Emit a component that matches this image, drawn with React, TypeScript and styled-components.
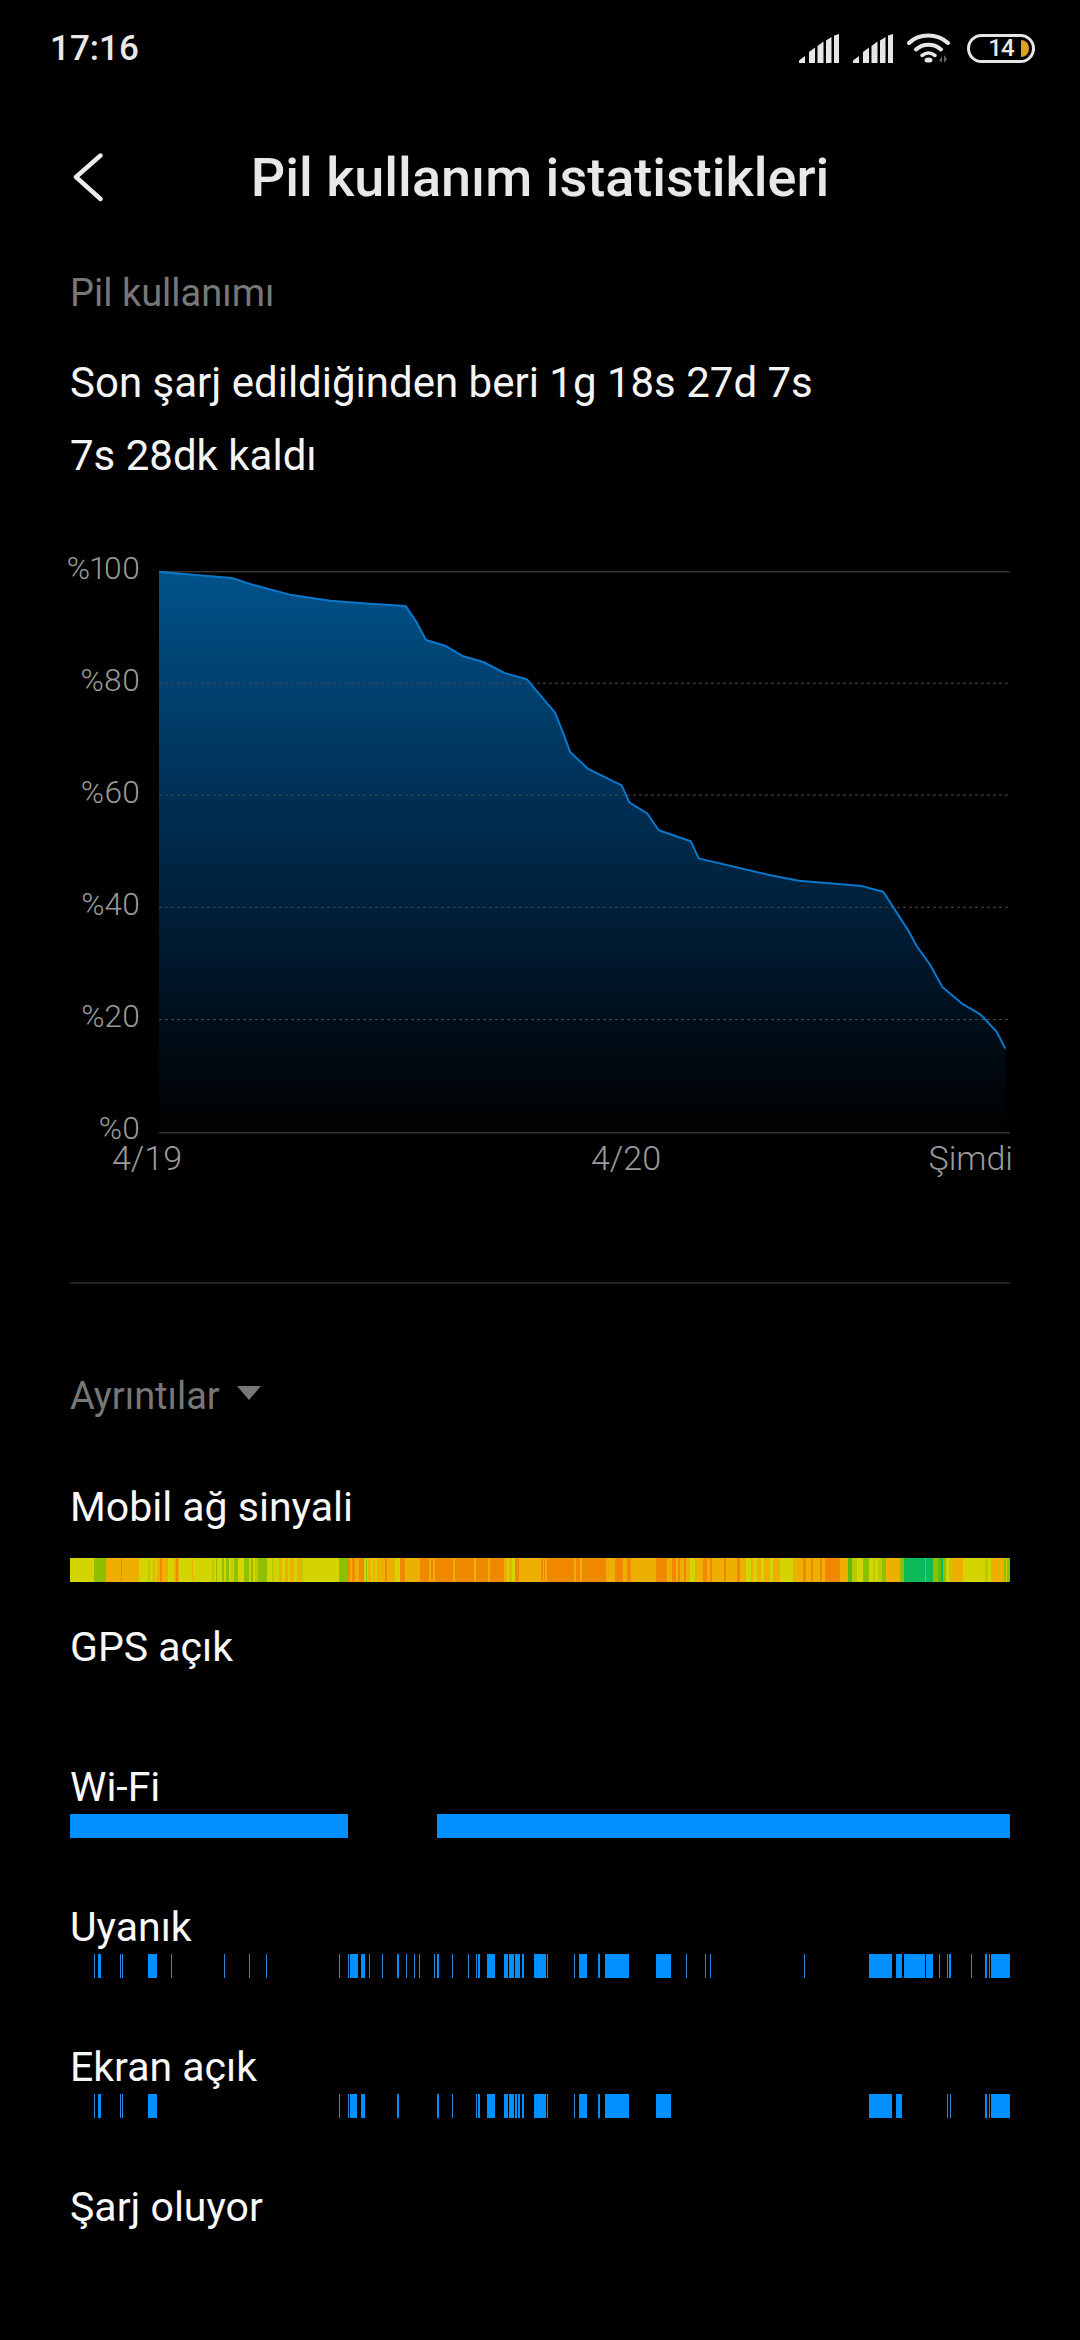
import React from "react";
import styled, { createGlobalStyle } from "styled-components";

const GlobalStyle = createGlobalStyle`
  html, body { margin: 0; padding: 0; background: #000; }
  body { font-family: Roboto, "Noto Sans", sans-serif; color: #fff; }
`;

const Page = styled.div`
  width: 1080px;
  height: 2340px;
  background: #000;
  overflow: hidden;
`;

const StatusBar = styled.div`
  height: 96px;
  padding: 0 45px 0 50px;
  display: flex;
  align-items: center;
  justify-content: space-between;
`;

const Clock = styled.span`
  font-size: 35px;
  font-weight: 500;
  color: #e8e8e8;
`;

const StatusIcons = styled.div`
  display: flex;
  align-items: center;
  gap: 14px;
`;

const Battery = styled.div`
  position: relative;
  box-sizing: border-box;
  width: 68px;
  height: 29px;
  margin-left: 2px;
  border: 3px solid #e6e6e6;
  border-radius: 15px;
  display: flex;
  align-items: center;
  justify-content: center;
  font-size: 24px;
  font-weight: 500;
  letter-spacing: -1px;
  color: #e8e8e8;
`;

const BatteryFill = styled.span`
  position: absolute;
  right: 3px;
  top: 3px;
  width: 8px;
  height: 17px;
  background: #e0a020;
  border-radius: 0 10px 10px 0;
`;

const Header = styled.header`
  height: 162px;
  display: grid;
  grid-template-columns: 160px 1fr 160px;
  align-items: center;
`;

const BackIcon = styled.svg`
  width: 32px;
  height: 50px;
  margin-left: 72px;
`;

const Title = styled.h1`
  margin: 0;
  text-align: center;
  font-size: 54px;
  font-weight: 500;
  white-space: nowrap;
  color: #e8e8e8;
`;

const Content = styled.main`
  padding: 0 70px;
`;

const SectionLabel = styled.div`
  font-size: 38px;
  line-height: 70px;
  color: #777;
`;

const Summary = styled.div`
  margin-top: 18px;
  font-size: 42px;
  line-height: 73px;
  color: #f4f4f4;
`;

const ChartRow = styled.div`
  margin-top: 65px;
  display: flex;
  gap: 19px;
  height: 584px;
`;

const YAxis = styled.div`
  width: 70px;
  display: flex;
  flex-direction: column;
  justify-content: space-between;
  align-items: flex-end;
`;

const AxisLabel = styled.span`
  font-size: 31.5px;
  line-height: 24px;
  font-weight: 300;
  font-variant-numeric: proportional-nums;
  color: #9a9a9a;
  white-space: nowrap;
`;

const Plot = styled.svg`
  width: 851px;
  height: 584px;
  display: block;
`;

const XAxis = styled.div`
  margin-top: 1px;
  height: 32px;
  margin-right: -3px;
  padding-left: 42px;
  display: grid;
  grid-template-columns: 479px auto 1fr;
  align-items: center;
`;

const XLabel = styled.span<{ $align: "left" | "center" | "right" }>`
  font-size: 34px;
  line-height: 32px;
  font-weight: 300;
  color: #9a9a9a;
  text-align: ${(p) => p.$align};
`;

const Divider = styled.hr`
  margin: 108px 0 0;
  border: 0;
  height: 2px;
  background: #222;
`;

const DetailsToggle = styled.div`
  margin-top: 84px;
  height: 56px;
  display: flex;
  align-items: center;
  gap: 16px;
  font-size: 38px;
  color: #777;
`;

const Caret = styled.svg`
  width: 26px;
  height: 14px;
  margin-bottom: 6px;
`;

const Rows = styled.div`
  margin-top: 55px;
`;

const Row = styled.section`
  height: 140px;
`;

const RowLabel = styled.div`
  font-size: 41px;
  line-height: 56px;
  color: #f8f8f8;
`;

const Track = styled.svg<{ $gap: number }>`
  display: block;
  width: 940px;
  height: 24px;
  margin-top: ${(p) => p.$gap}px;
`;

// chart data: coordinates read from the reference
const toX1 = (x: number) => 40 + x / 3 - 159;
const toX2 = (x: number) => 540 + x / 3 - 159;
const toY = (y: number) => 540 + y / 2.45 - 557;

const left: [number, number][] = [
  [357, 78], [440, 84], [575, 93], [640, 110], [755, 135], [870, 149], [1000, 157], [1097, 162],
  [1130, 202], [1158, 245], [1215, 259], [1270, 285], [1330, 299], [1395, 326], [1460, 341],
];
const right: [number, number][] = [
  [45, 423], [72, 478], [90, 519], [143, 560], [245, 601], [268, 643], [322, 670], [356, 711],
  [452, 738], [476, 780], [695, 822], [777, 835], [965, 848], [1030, 862], [1105, 957], [1130, 995],
  [1170, 1040], [1207, 1095], [1265, 1135], [1322, 1163], [1370, 1205], [1396, 1246],
];
const linePts = [
  ...left.map(([x, y]) => `${toX1(x).toFixed(1)},${toY(y).toFixed(1)}`),
  ...right.map(([x, y]) => `${toX2(x).toFixed(1)},${toY(y).toFixed(1)}`),
].join(" ");
const baseY = toY(1452);
const endX = toX2(1396);
const gridDash = [351, 625, 900, 1175].map(toY);

const Y = "#d4d400";
const G = "#8fc000";
const A = "#eeb000";
const O = "#f08800";
const E = "#0cba5a";
const L = "#b8cc00";
const M = "#5cbc10";

const signalA: [number, string][] = [
  [102, Y], [138, G], [183, A], [186, O], [237, A], [265, Y], [270, L], [279, Y], [285, A], [291, Y], [300, A], [305, O], [323, A],
  [342, Y], [348, A], [354, O], [357, A], [396, Y], [399, A], [420, Y], [456, Y], [462, L], [468, Y], [471, G], [486, Y],
  [492, G], [498, Y], [507, G], [513, Y], [519, L], [522, Y], [534, G], [552, Y], [567, G], [573, Y], [579, G], [585, Y],
  [594, L], [621, G], [636, Y], [642, L], [657, Y], [666, A], [675, Y], [684, A], [690, Y], [702, A], [711, Y], [723, A], [730, L],
  [836, Y], [864, G], [870, O], [876, A], [885, O], [897, A], [912, O], [918, Y], [922, G], [925, Y], [933, A], [939, Y], [945, A], [950, Y],
  [975, A], [980, O], [1005, A], [1020, Y], [1035, O], [1080, A], [1089, O], [1108, O], [1114, A], [1120, O], [1125, A], [1135, O], [1178, O],
  [1185, A], [1242, O], [1248, A], [1268, O], [1284, O], [1290, A], [1332, O], [1340, A], [1346, Y], [1355, A], [1365, Y], [1376, O], [1385, A], [1440, A],
];
const signalB: [number, string][] = [
  [4, A], [8, O], [12, A], [16, O], [22, A], [102, O], [108, A], [120, O], [126, A], [138, O], [198, O], [207, A], [225, A], [248, O], [262, A],
  [272, O], [348, A], [380, O], [396, A], [408, O], [414, A], [420, O], [432, A], [438, O], [450, A], [465, Y], [490, A], [500, O], [510, A],
  [516, O], [530, A], [552, A], [557, O], [590, A], [600, O], [617, A], [632, Y], [640, A], [650, Y], [664, A], [672, Y], [690, A], [700, Y], [720, A],
  [760, Y], [790, A], [798, O], [814, A], [820, O], [840, A], [846, O], [856, A], [865, O], [900, O], [925, A], [936, M], [950, L], [968, Y],
  [987, G], [1000, Y], [1006, L], [1015, Y], [1025, L], [1038, G], [1080, A], [1092, G], [1155, E], [1158, G], [1178, E], [1194, G], [1204, M], [1210, E],
  [1218, G], [1226, Y], [1235, L], [1269, A], [1335, Y], [1345, L], [1352, Y], [1370, A], [1392, A], [1398, G], [1402, Y], [1410, G],
];

const awakeA: [number, number][] = [
  [102, 105], [114, 123], [180, 183], [186, 189], [264, 291], [333, 336], [492, 495], [567, 570], [618, 621], [837, 840], [864, 867], [870, 894], [903, 915],
  [927, 930], [966, 969], [1011, 1017], [1038, 1041], [1062, 1065], [1077, 1080], [1122, 1125], [1131, 1137], [1176, 1179], [1224, 1227], [1248, 1251],
  [1254, 1260], [1281, 1305], [1332, 1344], [1347, 1362], [1365, 1380], [1386, 1392], [1422, 1440],
];
const awakeB: [number, number][] = [
  [0, 18], [21, 24], [102, 105], [117, 141], [174, 180], [195, 267], [348, 393], [438, 441], [495, 498], [510, 513], [792, 795], [987, 1056], [1068, 1086],
  [1092, 1155], [1158, 1179], [1197, 1200], [1221, 1224], [1227, 1233], [1293, 1296], [1335, 1341], [1347, 1350], [1353, 1410],
];
const screenA: [number, number][] = [
  [102, 105], [114, 123], [180, 183], [186, 189], [264, 291], [837, 840], [864, 867], [870, 891], [903, 915], [1011, 1017], [1131, 1137], [1176, 1179],
  [1248, 1251], [1254, 1260], [1281, 1305], [1332, 1344], [1347, 1362], [1365, 1371], [1374, 1380], [1386, 1392], [1422, 1440],
];
const screenB: [number, number][] = [
  [0, 18], [21, 24], [102, 105], [117, 141], [174, 180], [195, 267], [348, 393], [987, 1056], [1068, 1086], [1221, 1224], [1230, 1233], [1335, 1341],
  [1347, 1350], [1353, 1410],
];

type Span = { x: number; w: number; c: string };
const ticks = (a: [number, number][], b: [number, number][]): Span[] => [
  ...a.map(([s, e]) => ({ x: 60 + s / 3 - 70, w: (e - s) / 3, c: e - s <= 3 ? "#2f86d8" : "#0090ff" })),
  ...b.map(([s, e]) => ({ x: 540 + s / 3 - 70, w: (e - s) / 3, c: e - s <= 3 ? "#2f86d8" : "#0090ff" })),
];
const segments = (list: [number, string][], origin: number, first: number): Span[] => {
  let prev = first;
  return list.map(([end, c]) => {
    const s = { x: origin + prev / 3 - 70, w: (end - prev) / 3, c };
    prev = end;
    return s;
  });
};

const signal = [...segments(signalA, 60, 30), ...segments(signalB, 540, 0)];
const wifi: Span[] = [
  { x: 0, w: 278, c: "#0090ff" },
  { x: 367, w: 573, c: "#0090ff" },
];

const Bar = ({ spans, gap }: { spans: Span[]; gap: number }) => (
  <Track $gap={gap} viewBox="0 0 940 24" shapeRendering="crispEdges">
    {spans.map((s, i) => (
      <rect key={i} x={s.x} y={0} width={s.w} height={24} fill={s.c} />
    ))}
  </Track>
);

const SignalIcon = () => (
  <svg width="40" height="29" viewBox="0 0 40 29" fill="#e6e6e6">
    <path d="M0 29V26.5L6 22V29Z" />
    <path d="M10 29V18L16 13.5V29Z" />
    <path d="M18.5 29V12L24.5 7.5V29Z" />
    <path d="M27 29V6.5L32.5 3V29Z" />
    <path d="M35 29V1.5L40 0V29Z" />
  </svg>
);

const WifiIcon = () => (
  <svg width="44" height="30" viewBox="0 0 44 30" fill="none">
    <path d="M2 10C12 0 30 0 41 10" stroke="#e6e6e6" strokeWidth="4" strokeLinecap="round" />
    <path d="M9 16.5C16 10 27 10 34 16.5" stroke="#e6e6e6" strokeWidth="4" strokeLinecap="round" />
    <path d="M15 22.5C19 19.5 24 19.5 28 22.5" stroke="#e6e6e6" strokeWidth="3.5" strokeLinecap="round" />
    <ellipse cx="21.5" cy="27" rx="4" ry="2.6" fill="#e6e6e6" />
    <path d="M32 28L35 23V29Z M37 22V30L40 26Z" fill="#666" />
  </svg>
);

export default function App() {
  return (
    <Page>
      <GlobalStyle />
      <StatusBar>
        <Clock>17:16</Clock>
        <StatusIcons>
          <SignalIcon />
          <SignalIcon />
          <WifiIcon />
          <Battery>
            14
            <BatteryFill />
          </Battery>
        </StatusIcons>
      </StatusBar>
      <Header>
        <BackIcon viewBox="0 0 32 50" fill="none">
          <path d="M28.5 3.5L4 25L28.5 47" stroke="#ececec" strokeWidth="4.4" strokeLinecap="round" strokeLinejoin="round" />
        </BackIcon>
        <Title>Pil kullanım istatistikleri</Title>
      </Header>
      <Content>
        <SectionLabel>Pil kullanımı</SectionLabel>
        <Summary>
          <div>Son şarj edildiğinden beri 1g 18s 27d 7s</div>
          <div>7s 28dk kaldı</div>
        </Summary>
        <ChartRow>
          <YAxis>
            {["%100", "%80", "%60", "%40", "%20", "%0"].map((t) => (
              <AxisLabel key={t}>{t}</AxisLabel>
            ))}
          </YAxis>
          <Plot viewBox="0 0 851 584">
            <defs>
              <linearGradient id="area" x1="0" y1="0" x2="0" y2="1">
                <stop offset="0" stopColor="#00538a" />
                <stop offset="0.4" stopColor="#003056" />
                <stop offset="0.8" stopColor="#000f1c" />
                <stop offset="1" stopColor="#000000" />
              </linearGradient>
            </defs>
            <polygon points={`${linePts} ${endX},${baseY} 0,${baseY}`} fill="url(#area)" />
            <line x1="0" x2="851" y1={toY(78)} y2={toY(78)} stroke="#333" strokeWidth="1.5" />
            <line x1="0" x2="851" y1={baseY} y2={baseY} stroke="#333" strokeWidth="1.5" />
            {gridDash.map((y) => (
              <line key={y} x1="0" x2="849" y1={y} y2={y} stroke="#4a4a4a" strokeWidth="1" strokeDasharray="3 3" />
            ))}
            <polyline points={linePts} fill="none" stroke="#0a78cc" strokeWidth="2" strokeLinejoin="round" />
          </Plot>
        </ChartRow>
        <XAxis>
          <XLabel $align="left">4/19</XLabel>
          <XLabel $align="center">4/20</XLabel>
          <XLabel $align="right">Şimdi</XLabel>
        </XAxis>
        <Divider />
        <DetailsToggle>
          Ayrıntılar
          <Caret viewBox="0 0 26 14">
            <path d="M1 0H25L13 14Z" fill="#777" />
          </Caret>
        </DetailsToggle>
        <Rows>
          <Row>
            <RowLabel>Mobil ağ sinyali</RowLabel>
            <Bar spans={signal} gap={23} />
          </Row>
          <Row>
            <RowLabel>GPS açık</RowLabel>
          </Row>
          <Row>
            <RowLabel>Wi-Fi</RowLabel>
            <Bar spans={wifi} gap={-1} />
          </Row>
          <Row>
            <RowLabel>Uyanık</RowLabel>
            <Bar spans={ticks(awakeA, awakeB)} gap={-1} />
          </Row>
          <Row>
            <RowLabel>Ekran açık</RowLabel>
            <Bar spans={ticks(screenA, screenB)} gap={-1} />
          </Row>
          <Row>
            <RowLabel>Şarj oluyor</RowLabel>
          </Row>
        </Rows>
      </Content>
    </Page>
  );
}
